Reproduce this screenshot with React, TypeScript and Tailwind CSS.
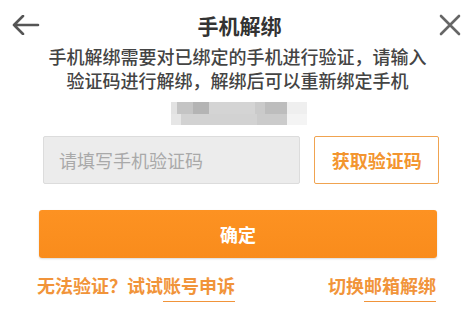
export default function App() {
  const font = { fontFamily: '"Noto Sans CJK SC", "Noto Sans", sans-serif' }
  return (
    <div className="w-[475px] h-[318px] bg-white overflow-hidden" style={font}>
      <div className="flex items-center justify-between h-[50px] px-[12px]">
        <svg width="28" height="20" viewBox="0 0 28 20" className="text-[#555]">
          <path d="M2 10 H26 M11 1 L2 10 L11 19" fill="none" stroke="currentColor" strokeWidth="2.6" strokeLinecap="round" strokeLinejoin="round" />
        </svg>
        <span className="text-[21px] font-bold text-[#333] leading-none">手机解绑</span>
        <svg width="22" height="22" viewBox="0 0 22 22" className="text-[#666] mr-[2px]">
          <path d="M2 2 L20 20 M20 2 L2 20" fill="none" stroke="currentColor" strokeWidth="2.6" strokeLinecap="round" />
        </svg>
      </div>
      <div className="text-center text-[18px] font-medium text-[#444] leading-[24px] -mt-[6px]">
        <p>手机解绑需要对已绑定的手机进行验证，请输入</p>
        <p>验证码进行解绑，解绑后可以重新绑定手机</p>
      </div>
      <div className="flex justify-center mt-[10px]">
        <div className="flex flex-col w-[136px] h-[23px] ml-[2px]">
          <div className="flex h-[12px]">
            <div className="w-[6px] bg-[#e2e2e2]" />
            <div className="w-[16px] bg-[#c4c4c4]" />
            <div className="w-[16px] bg-[#b4b4b4]" />
            <div className="w-[46px] bg-[#d4d4d4]" />
            <div className="w-[10px] bg-[#cacaca]" />
            <div className="w-[22px] bg-[#bdbdbd]" />
            <div className="w-[20px] bg-[#efefef]" />
          </div>
          <div className="flex h-[11px]">
            <div className="w-[10px] bg-[#e6e6e6]" />
            <div className="w-[76px] bg-[#d2d2d2]" />
            <div className="w-[30px] bg-[#cbcbcb]" />
            <div className="w-[20px] bg-[#f4f4f4]" />
          </div>
        </div>
      </div>
      <div className="flex gap-[14px] px-[43px] mt-[11px] pr-[36px]">
        <div className="w-[258px] h-[48px] bg-[#ececec] border border-[#dcdcdc] rounded-[2px] flex items-center pl-[15px] text-[18px] text-[#a9a9a9]">
          请填写手机验证码
        </div>
        <div className="w-[125px] h-[48px] border-[1.5px] border-[#f0a350] rounded-[2px] flex items-center justify-center text-[18px] font-bold text-[#f3952f]">
          获取验证码
        </div>
      </div>
      <div className="px-[39px] pr-[38px] mt-[26px]">
        <div className="h-[48px] rounded-[3px] bg-gradient-to-b from-[#fd9222] to-[#f98c1c] shadow-[0_1px_2px_rgba(0,0,0,0.15)] flex items-center justify-center text-white text-[18px] font-bold">
          确定
        </div>
      </div>
      <div className="flex justify-between px-[37px] pr-[39px] mt-[16px] text-[18px] font-bold text-[#f1943a] leading-[22px]">
        <span>
          无法验证？试试<span className="border-b border-[#f1943a] pb-[3px]">账号申诉</span>
        </span>
        <span>
          切换<span className="border-b border-[#f1943a] pb-[3px]">邮箱解绑</span>
        </span>
      </div>
    </div>
  )
}
